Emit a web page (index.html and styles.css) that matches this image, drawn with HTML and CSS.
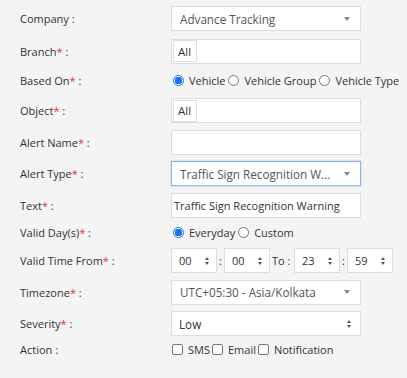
FILE: index.html
```html
<html>
  <head>
    <link rel="stylesheet" href="styles.css">
  </head>
  <body>
    <div id="form">
      <div class="row first">
        <label class="caption">Company :</label>
        <div class="select"><span class="value">Advance Tracking</span><span class="caret"></span></div>
      </div>
      <div class="row">
        <label class="caption">Branch<em>*</em> :</label>
        <div class="tags"><span class="tag">All</span></div>
      </div>
      <div class="row radio-row">
        <label class="caption">Based On<em>*</em> :</label>
        <div class="choices">
          <span class="radio checked"></span><span class="opt">Vehicle</span>
          <span class="radio"></span><span class="opt">Vehicle Group</span>
          <span class="radio"></span><span class="opt">Vehicle Type</span>
        </div>
      </div>
      <div class="row">
        <label class="caption">Object<em>*</em> :</label>
        <div class="tags"><span class="tag">All</span></div>
      </div>
      <div class="row">
        <label class="caption">Alert Name<em>*</em> :</label>
        <div class="input"></div>
      </div>
      <div class="row">
        <label class="caption">Alert Type<em>*</em> :</label>
        <div class="select focus"><span class="value">Traffic Sign Recognition W...</span><span class="caret"></span></div>
      </div>
      <div class="row">
        <label class="caption">Text<em>*</em> :</label>
        <div class="input">Traffic Sign Recognition Warning</div>
      </div>
      <div class="row radio-row short">
        <label class="caption">Valid Day(s)<em>*</em> :</label>
        <div class="choices">
          <span class="radio checked"></span><span class="opt">Everyday</span>
          <span class="radio"></span><span class="opt">Custom</span>
        </div>
      </div>
      <div class="row">
        <label class="caption">Valid Time From<em>*</em> :</label>
        <div class="times">
          <div class="num">00<span class="spin"></span></div>
          <span class="sep">:</span>
          <div class="num">00<span class="spin"></span></div>
          <span class="to">To :</span>
          <div class="num">23<span class="spin"></span></div>
          <span class="sep">:</span>
          <div class="num">59<span class="spin"></span></div>
        </div>
      </div>
      <div class="row">
        <label class="caption">Timezone<em>*</em> :</label>
        <div class="select"><span class="value">UTC+05:30 - Asia/Kolkata</span><span class="caret"></span></div>
      </div>
      <div class="row">
        <label class="caption">Severity<em>*</em> :</label>
        <div class="select plain"><span class="value">Low</span><span class="spin"></span></div>
      </div>
      <div class="row check-row">
        <label class="caption">Action :</label>
        <div class="choices">
          <span class="check"></span><span class="opt">SMS</span>
          <span class="check"></span><span class="opt">Email</span>
          <span class="check"></span><span class="opt">Notification</span>
        </div>
      </div>
    </div>
  </body>
</html>
```

FILE: styles.css
```css
body {
  margin: 0;
  background: #f4f4f4;
  font-family: "Open Sans", sans-serif;
  font-size: 11px;
  color: #333;
}
#form {
  padding: 6px 0 0 20px;
}
.row {
  display: flex;
  align-items: center;
  height: 25px;
  margin-bottom: 6.5px;
}
.row.first {
  margin-bottom: 7.5px;
}
.radio-row {
  height: 21.5px;
}
.radio-row.short {
  height: 17.5px;
}
.check-row {
  height: 13px;
}
.caption {
  width: 151px;
  flex: none;
}
.caption em {
  color: #e8312f;
  font-style: normal;
}
.select,
.input,
.tags,
.num {
  box-sizing: border-box;
  height: 25px;
  background: #fff;
  border: 1px solid #ddd;
  display: flex;
  align-items: center;
}
.select,
.input,
.tags {
  width: 190px;
}
.select {
  padding: 0 8px;
  justify-content: space-between;
  font-size: 11.7px;
  color: #555;
}
.select.focus {
  border-color: #8ab3ea;
  box-shadow: 0 0 2px rgba(102, 153, 230, 0.5);
}
.select.plain {
  padding-left: 7px;
  color: #333;
}
.caret {
  width: 0;
  height: 0;
  border-left: 3px solid transparent;
  border-right: 3px solid transparent;
  border-top: 4px solid #888;
  margin-right: 2px;
}
.input {
  padding: 0 2px;
}
.tags {
  padding: 0 1px;
}
.tag {
  border: 1px solid #ddd;
  padding: 0 5px 0 4px;
  height: 20px;
  display: flex;
  align-items: center;
  background: #fff;
  font-size: 11.5px;
}
.choices {
  display: flex;
  align-items: center;
  margin-left: 2px;
}
.opt {
  margin: 0 3px 0 5px;
}
.radio {
  box-sizing: border-box;
  width: 11px;
  height: 11px;
  border-radius: 50%;
  border: 1px solid #777;
  background: #fff;
}
.radio.checked {
  border-color: #1a73e8;
  background: radial-gradient(circle, #1a73e8 0 3.5px, #fff 4px);
}
.check {
  box-sizing: border-box;
  width: 11px;
  height: 11px;
  border: 1px solid #777;
  border-radius: 2px;
  background: #fff;
  margin-left: -1px;
}
.times {
  display: flex;
  align-items: center;
}
.num {
  width: 46px;
  padding: 0 6px 0 7px;
  justify-content: space-between;
}
.sep {
  width: 7px;
  text-align: center;
}
.to {
  width: 22px;
  padding-left: 2px;
}
.spin {
  position: relative;
  width: 5px;
  height: 8px;
}
.spin::before,
.spin::after {
  content: "";
  position: absolute;
  left: 0;
  border-left: 2.5px solid transparent;
  border-right: 2.5px solid transparent;
}
.spin::before {
  top: 0;
  border-bottom: 3px solid #555;
}
.spin::after {
  bottom: 0;
  border-top: 3px solid #555;
}
```
